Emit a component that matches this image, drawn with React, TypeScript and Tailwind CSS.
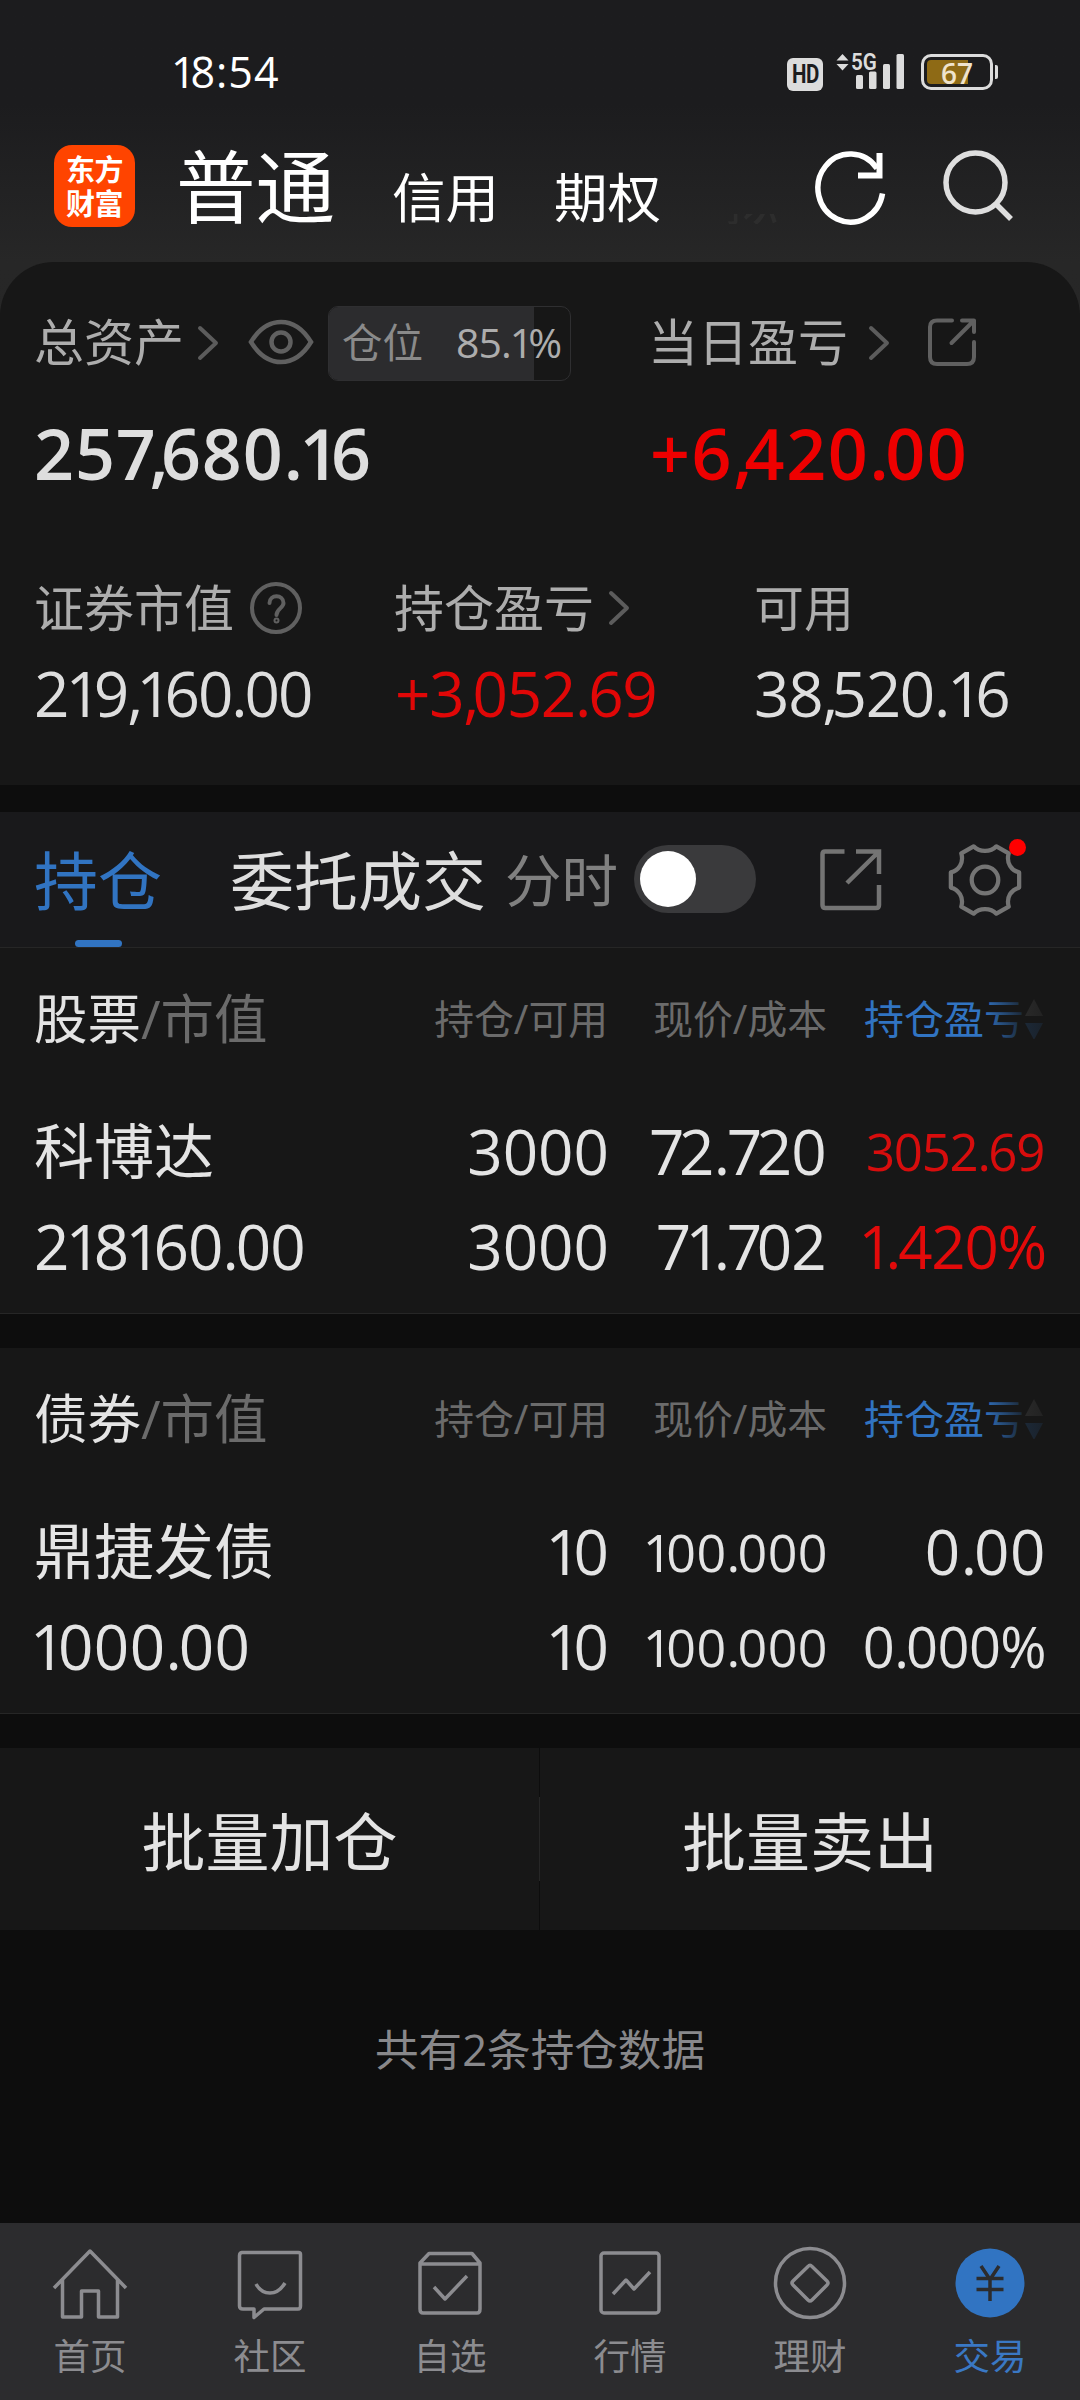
import type { ReactNode } from "react";

const STOCKS = {
  title: "股票",
  rows: [
    [
      { text: "科博达", cls: "text-[60px]" },
      { text: "3000", cls: "text-[62px]" },
      { text: "72.720", cls: "text-[62px] tracking-[-0.8px] pr-[2px]" },
      { text: "3052.69", cls: "text-[51px] text-[#d70d0d] tracking-[-1.3px] pr-[2px]" },
    ],
    [
      { text: "218160.00", cls: "text-[62px] tracking-[-0.9px]" },
      { text: "3000", cls: "text-[62px]" },
      { text: "71.702", cls: "text-[62px] tracking-[-0.8px] pr-[2px]" },
      { text: "1.420%", cls: "text-[60px] text-[#e20a0a] tracking-[-1.2px]" },
    ],
  ],
};

const BONDS = {
  title: "债券",
  rows: [
    [
      { text: "鼎捷发债", cls: "text-[60px]" },
      { text: "10", cls: "text-[62px]" },
      { text: "100.000", cls: "text-[52px] tracking-[0.4px]" },
      { text: "0.00", cls: "text-[62px] tracking-[0.6px]" },
    ],
    [
      { text: "1000.00", cls: "text-[62px] -ml-[4px] tracking-[0.4px]" },
      { text: "10", cls: "text-[62px]" },
      { text: "100.000", cls: "text-[52px] tracking-[0.4px]" },
      { text: "0.000%", cls: "text-[56px] tracking-[-0.6px]" },
    ],
  ],
};

// narrow glyphs get a tighter advance than the tabular default
const TRIM: Record<string, string> = {
  "1": "tracking-[-0.12em]",
  "7": "tracking-[-0.09em]",
  ",": "tracking-[-0.11em]",
  ".": "tracking-[-0.05em]",
};

function Num({ text, className = "" }: { text: string; className?: string }) {
  return (
    <span className={`whitespace-nowrap ${className}`}>
      {text.split(/([17,.]|\d(?=1))/).map((part, i) =>
        i % 2 ? (
          <span key={i} className={TRIM[part] ?? "tracking-[-0.06em]"}>
            {part}
          </span>
        ) : (
          part
        )
      )}
    </span>
  );
}

function Chevron() {
  return (
    <svg width="22" height="36" viewBox="0 0 22 36" fill="none" stroke="#5c5c5c" strokeWidth="4" strokeLinecap="round">
      <path d="M3 3l16 15L3 33" strokeLinejoin="round" />
    </svg>
  );
}

function StatusBar() {
  return (
    <div className="flex h-[130px] items-start pl-[171px] pr-[87px] pt-[50px]">
      <Num text="18:54" className="-mt-px h-[45px] text-[43px] font-medium leading-[45px] tracking-[1px] text-white" />
      <div className="ml-auto flex">
        <div className="mt-[8px] flex h-[33px] w-[36px] items-center justify-center rounded-[6px] bg-[#dcdcdc] font-[Roboto] text-[25px] font-bold leading-none tracking-[-0.5px] text-[#1c1c1e]">
          <span className="scale-x-[0.82]">HD</span>
        </div>
        <div className="relative ml-[13px] h-[40px] w-[70px]">
          <svg className="h-[40px] w-[70px]" viewBox="0 0 70 40" fill="#dcdcdc">
            <path d="M0.5 10.500L6.500 4l6 6.500zM0.500 14h12L6.500 20.500z" />
            <rect x="20" y="25" width="7" height="14" rx="1.500" />
            <rect x="33" y="21.500" width="7.500" height="17.500" rx="1.500" />
            <rect x="47" y="14" width="7" height="25" rx="1.500" />
            <rect x="60.500" y="4" width="7.500" height="35" rx="1.500" />
          </svg>
          <span className="absolute left-[15px] top-[1px] origin-left scale-x-[0.86] font-[Roboto] text-[24px] font-semibold leading-[22px] text-[#dcdcdc]">
            5G
          </span>
        </div>
        <div className="relative ml-[15px] mt-[4px] h-[36px] w-[72px] rounded-[10px] border-[3px] border-[#dcdcdc] p-[3px]">
          <div className="h-[24px] w-[41px] rounded-l-[4px] bg-[#8e6a15]" />
          <div className="absolute inset-0 flex items-center justify-center pt-[1px] text-[28px] font-semibold leading-none text-[#efe3cc]">
            67
          </div>
          <div className="absolute -right-[8px] top-[8px] h-[14px] w-[3px] rounded-r-[2px] bg-[#dcdcdc]" />
        </div>
      </div>
    </div>
  );
}

function Header() {
  return (
    <div className="flex h-[132px] pl-[54px]">
      <div className="mt-[15px] flex h-[82px] w-[81px] flex-col items-center justify-center gap-[5px] rounded-[18px] bg-[#ff4400] text-[29px] font-bold leading-[29px] tracking-[-0.5px] text-white">
        <div>东方</div>
        <div>财富</div>
      </div>
      <div className="ml-[41px] mt-[16px] w-[216px] text-[79.500px] leading-[80px] text-white">普通</div>
      <div className="mt-[38px] w-[162px] text-[53.500px] leading-[60px] text-white">信用</div>
      <div className="mt-[38px] w-[171px] text-[53.500px] leading-[60px] text-white">期权</div>
      {/* the next tab fades out under the action icons */}
      <div className="relative mt-[84px] h-[10px] w-[62px] overflow-hidden">
        <div className="absolute -bottom-[3px] left-0 text-[53px] leading-[53px] text-[#2d2d2d]">模拟</div>
      </div>
      <svg className="ml-[25px] mt-[18px]" width="76" height="80" viewBox="0 0 76 80" fill="none" stroke="#fff" strokeWidth="5.500">
        <path d="M70.500 45.500A32.500 34 0 1 1 65 20.500" />
        <path d="M67.500 5v22.500H46" strokeWidth="6" />
      </svg>
      <svg className="ml-[50px] mt-[18px]" width="76" height="80" viewBox="0 0 76 80" fill="none" stroke="#dedede" strokeWidth="5.500">
        <circle cx="37.500" cy="34.500" r="29.500" />
        <path d="M58 56l15 15" />
      </svg>
    </div>
  );
}

function Stat({ label, icon, children }: { label: string; icon?: ReactNode; children: ReactNode }) {
  return (
    <div>
      <div className="flex h-[60px] items-center text-[50px] leading-[60px] text-[#adadad]">
        {label}
        {icon}
      </div>
      <div className="mt-[25px] h-[60px] leading-[60px]">{children}</div>
    </div>
  );
}

function Assets() {
  return (
    <section className="h-[523px] rounded-t-[54px] bg-[#171717] pl-[34px]">
      <div className="flex h-[80px] items-center pt-[80px]">
        <span className="text-[50px] text-[#adadad]">总资产</span>
        <div className="ml-[13px] mt-[1px]">
          <Chevron />
        </div>
        <svg className="ml-[29px]" width="66" height="48" viewBox="0 0 66 48" fill="none" stroke="#606060" strokeWidth="4.500">
          <path d="M3 24C11 11 21 4 33 4s22 7 30 20C55 37 45 44 33 44S11 37 3 24z" />
          <circle cx="33" cy="24" r="9.500" />
        </svg>
        <div className="relative ml-[14px] mt-[2px] flex h-[75px] w-[243px] items-center overflow-hidden rounded-[10px] border border-[#2f2f31] pl-[13px]">
          <div className="absolute inset-y-0 left-0 w-[85.1%] bg-[#2c2c2e]" />
          <span className="relative w-[114px] text-[40.500px] text-[#8a8a8a]">仓位</span>
          <Num text="85.1%" className="relative text-[41px] tracking-[-1px] text-[#adadad]" />
        </div>
        <span className="ml-[77px] text-[50px] text-[#adadad]">当日盈亏</span>
        <div className="ml-[20px] mt-[1px]">
          <Chevron />
        </div>
        <svg className="ml-[37px]" width="50" height="50" viewBox="0 0 50 50" fill="none" stroke="#606060" strokeWidth="4" strokeLinecap="round" strokeLinejoin="round">
          <path d="M25 3.500H10Q3 3.500 3 10V40Q3 47 10 47H40Q47 47 47 40V25" />
          <path d="M35 3.500H47V15M47 3.500L24.500 26" />
        </svg>
      </div>
      <div className="mt-[71px] flex h-[80px] text-[70px] font-semibold leading-[80px]">
        <Num text="257,680.16" className="w-[616px] tracking-[0.9px] text-[#dedede]" />
        <Num text="+6,420.00" className="tracking-[1.6px] text-[#ee0000]" />
      </div>
      <div className="mt-[85px] grid grid-cols-[360px_360px_1fr]">
        <Stat
          label="证券市值"
          icon={
            <svg className="ml-[15px]" width="54" height="54" viewBox="0 0 54 54" fill="none" stroke="#606060" strokeWidth="4">
              <circle cx="27" cy="27" r="24" />
              <path d="M20.500 22c0-9 14-9 14 0 0 5-7 6-7 12" strokeLinecap="round" />
              <circle cx="27.500" cy="39.500" r="1" />
            </svg>
          }
        >
          <Num text="219,160.00" className="text-[62px] tracking-[-2px] text-[#dedede]" />
        </Stat>
        <Stat
          label="持仓盈亏"
          icon={
            <div className="ml-[14px]">
              <Chevron />
            </div>
          }
        >
          <Num text="+3,052.69" className="ml-px text-[62px] tracking-[-1.300px] text-[#e00707]" />
        </Stat>
        <Stat label="可用">
          <Num text="38,520.16" className="text-[62px] tracking-[-1.300px] text-[#dedede]" />
        </Stat>
      </div>
    </section>
  );
}

function Tabs() {
  return (
    <div className="flex h-[136px] border-b border-[#262626] bg-[#19191b] pl-[34px]">
      <div className="flex w-[196px] flex-col text-[64px] text-[#3174c2]">
        <div className="mt-[27px] h-[84px] leading-[84px]">持仓</div>
        <div className="ml-[41px] mt-[17px] h-[7px] w-[47px] rounded-full bg-[#3174c2]" />
      </div>
      <div className="mt-[27px] h-[84px] w-[275px] text-[64px] leading-[84px] text-[#dedede]">委托成交</div>
      <div className="mt-[27px] h-[84px] w-[129px] text-[56.500px] leading-[84px] text-[#808080]">分时</div>
      <div className="mt-[33px] h-[68px] w-[122px] rounded-full bg-[#3a3a3c] p-[6px]">
        <div className="h-[56px] w-[56px] rounded-full bg-white" />
      </div>
      <svg className="ml-[63px] mt-[35px]" width="64" height="64" viewBox="0 0 64 64" fill="none" stroke="#747474" strokeWidth="4.500">
        <path d="M25.500 4.500H6Q3.500 4.500 3.500 7V58Q3.500 61 6.500 61H57Q60 61 60 58V38" />
        <path d="M37 4.500H60V27M60 4.500L28 36" />
      </svg>
      <div className="relative ml-[65px] mt-[31px] h-[76px] w-[80px]">
        <svg width="74" height="74" viewBox="0 0 78 78" fill="none" stroke="#747474" strokeWidth="4.500" strokeLinejoin="round">
          <path d="M27 3.500C33 10 45 10 51 3.500L64 11C61 21 67 29 75 31V47C67 49 61 57 64 67L51 74.500C45 68 33 68 27 74.500L14 67C17 57 11 49 3 47V31C11 29 17 21 14 11Z" />
          <circle cx="39" cy="39" r="14" />
        </svg>
        <div className="absolute left-[61px] top-[-4px] h-[17px] w-[17px] rounded-full bg-[#ff0000]" />
      </div>
    </div>
  );
}

function Holdings({ title, rows }: typeof STOCKS) {
  return (
    <section className="h-[366px] border-b border-[#262626] bg-[#171717] pl-[34px] pr-[34px] pt-[30px]">
      <div className="grid h-[82px] grid-cols-[300px_274px_219px_218px] items-center text-[40px] text-[#6b6b6b]">
        <div className="text-[53.500px] leading-none">
          <span className="text-[#e4e4e4]">{title}</span>/市值
        </div>
        <div className="text-right text-[39.800px] leading-none">持仓/可用</div>
        <div className="text-right text-[39.800px] leading-none">现价/成本</div>
        <div className="relative flex items-center justify-end leading-none text-[#3174c2]">
          <span>持仓盈亏</span>
          <svg width="21" height="40" viewBox="0 0 21 40">
            <path d="M1 17L10 0l9 17z" fill="#777" />
            <path d="M1 24h18l-9 17z" fill="#3174c2" />
          </svg>
          <div className="absolute -right-[2px] h-[60px] w-[64px] bg-gradient-to-r from-transparent via-[#171717]/80 via-60% to-[#171717]/90" />
        </div>
      </div>
      <div className="mt-[44px] text-[#e4e4e4]">
        {rows.map((row, i) => (
          <div key={i} className="grid h-[95px] grid-cols-[300px_275px_219px_218px] leading-[95px]">
            {row.map((cell, j) => (
              <Num key={j} text={cell.text} className={`${cell.cls} ${j > 0 ? "text-right" : ""}`} />
            ))}
          </div>
        ))}
      </div>
    </section>
  );
}

const NAV = [
  {
    label: "首页",
    icon: <path d="M4 42L40 5l36 37M12.500 34v37H31.500V45H48.500V71H67.500V34" />,
  },
  {
    label: "社区",
    icon: (
      <>
        <path d="M11.500 6.500H68.500Q70.500 6.500 70.500 8.500V60Q70.500 63 68 63H34L24 71.500V63H13Q9.500 63 9.500 60V9.500Q9.500 6.500 12.500 6.500z" />
        <path d="M26 38Q31 47 40 47T55 37" />
      </>
    ),
  },
  {
    label: "自选",
    icon: (
      <>
        <path d="M19 7.500H62L70 17V63Q70 67 67 67H13Q10 67 10 63V17ZM10 18H70" />
        <path d="M24 41L35 53 57 30" />
      </>
    ),
  },
  {
    label: "行情",
    icon: (
      <>
        <rect x="11" y="7" width="58" height="60" rx="3" />
        <path d="M23 48L36 34 44 43 60 26" />
      </>
    ),
  },
  {
    label: "理财",
    icon: (
      <>
        <circle cx="40" cy="37" r="34.500" />
        <path d="M38 20.500Q40 18 42 20.500L57 35Q59 37 57 39L42 54Q40 56 38 54L23 39Q21 37 23 35Z" />
      </>
    ),
  },
  {
    label: "交易",
    active: true,
    icon: (
      <>
        <circle cx="40" cy="37" r="34.500" fill="#3174c2" stroke="none" />
        <path d="M31 20L40 33.500 49 20M40 33V55M26.500 32.500h27M26.500 43.500h27" stroke="#2c2c2e" />
      </>
    ),
  },
];

function BottomNav() {
  return (
    <nav className="grid h-[177px] grid-cols-6 bg-[#2c2c2e]">
      {NAV.map((item) => (
        <div key={item.label} className={`flex flex-col items-center pt-[23px] ${item.active ? "text-[#3a78c4]" : "text-[#8c8c90]"}`}>
          <svg width="80" height="76" viewBox="0 0 80 76" fill="none" stroke="currentColor" strokeWidth="3.500" strokeLinejoin="round">
            {item.icon}
          </svg>
          <div className="mt-[9px] text-[36.500px] leading-[50px]">{item.label}</div>
        </div>
      ))}
    </nav>
  );
}

export default function App() {
  return (
    <div className="flex h-[2400px] w-[1080px] flex-col overflow-hidden bg-[#0d0d0d] font-['Open_Sans','Noto_Sans_CJK_SC',sans-serif]">
      <div className="bg-linear-to-b from-[#1c1c1e] from-40% to-[#272727]">
        <StatusBar />
        <Header />
      </div>
      <div className="bg-linear-to-b from-[#272727] to-[#242424]">
        <Assets />
      </div>
      <div className="mt-[27px]">
        <Tabs />
      </div>
      <Holdings {...STOCKS} />
      <div className="mt-[34px]">
        <Holdings {...BONDS} />
      </div>
      <div className="mt-[34px] flex h-[182px] bg-[#171717] text-center text-[64px] leading-[188px] text-[#e4e4e4]">
        <div className="w-[539px]">批量加仓</div>
        <div className="w-px bg-[#0d0d0d] py-[49px]">
          <div className="h-full bg-[#262626]" />
        </div>
        <div className="w-[540px]">批量卖出</div>
      </div>
      <div className="mt-[89px] text-center text-[43.600px] leading-[60px] text-[#88888b]">共有2条持仓数据</div>
      <div className="mt-auto">
        <BottomNav />
      </div>
    </div>
  );
}
